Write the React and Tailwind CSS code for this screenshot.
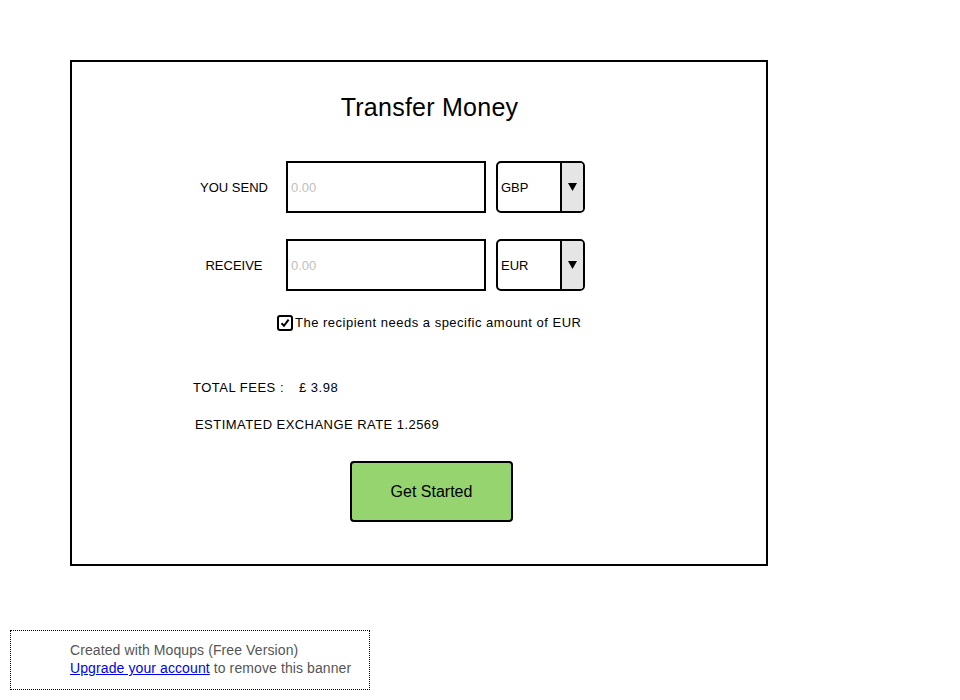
const ROWS = [
  { label: "YOU SEND", currency: "GBP" },
  { label: "RECEIVE", currency: "EUR" },
];

function CurrencySelect({ value }) {
  return (
    <div className="ml-[10px] flex h-[52px] w-[89px] overflow-hidden rounded-[5px] border-2 border-black">
      <div className="flex flex-1 items-center pl-[3px] pt-[1px] text-[13px] text-black">{value}</div>
      <div className="flex w-[23px] items-center justify-center border-l-2 border-black bg-[#e5e5e5]">
        <svg width="9" height="8" viewBox="0 0 9 8">
          <polygon points="0,0 9,0 4.5,8" fill="#000" />
        </svg>
      </div>
    </div>
  );
}

export default function App() {
  return (
    <div className="relative h-[700px] w-[960px] bg-white font-['Liberation_Sans',Arial,sans-serif] text-black">
      <div className="absolute left-[70px] top-[60px] h-[506px] w-[698px] border-2 border-black">
        <h1 className="mt-[31px] pl-[21px] text-center text-[25px] leading-[28px] tracking-[0.25px]">Transfer Money</h1>

        <div className="mt-[40px] flex flex-col gap-[26px] pl-[110px]">
          {ROWS.map((row) => (
            <div key={row.label} className="flex items-center">
              <span className="w-[104px] pt-[1px] text-center text-[13px]">{row.label}</span>
              <div className="flex h-[52px] w-[200px] items-center border-2 border-black pl-[3px] pt-[1px] text-[13px] text-[#c0c0c0]">
                0.00
              </div>
              <CurrencySelect value={row.currency} />
            </div>
          ))}
        </div>

        <label className="ml-[205px] mt-[24px] flex h-[16px] items-center text-[13px] leading-[16px]">
          <span className="flex h-[16px] w-[16px] items-center justify-center rounded-[3px] border-2 border-black">
            <svg width="10" height="10" viewBox="0 0 10 10">
              <path d="M1.5 5.2 L4 7.8 L8.6 1.6" fill="none" stroke="#000" strokeWidth="2" />
            </svg>
          </span>
          <span className="ml-[2px] tracking-[0.5px]">The recipient needs a specific amount of EUR</span>
        </label>

        <div className="ml-[121px] mt-[49px] flex text-[13px] leading-[16px] tracking-[0.5px]">
          <span>TOTAL FEES :</span>
          <span className="ml-[15px]">£ 3.98</span>
        </div>

        <p className="ml-[123px] mt-[21px] text-[13px] leading-[16px] tracking-[0.45px]">ESTIMATED EXCHANGE RATE 1.2569</p>

        <button className="ml-[278px] mt-[28px] flex h-[61px] w-[163px] items-center justify-center rounded-[4px] border-2 border-black bg-[#95d46f] text-[16px]">
          Get Started
        </button>
      </div>

      <div className="absolute left-[10px] top-[630px] h-[60px] w-[360px] border border-dotted border-black pl-[59px] pt-[10px] text-[14px] leading-[18px] tracking-[0.1px] text-[#555555]">
        <p>Created with Moqups (Free Version)</p>
        <p>
          <a href="#" className="text-[#0000ee] underline">Upgrade your account</a> to remove this banner
        </p>
      </div>
    </div>
  );
}
